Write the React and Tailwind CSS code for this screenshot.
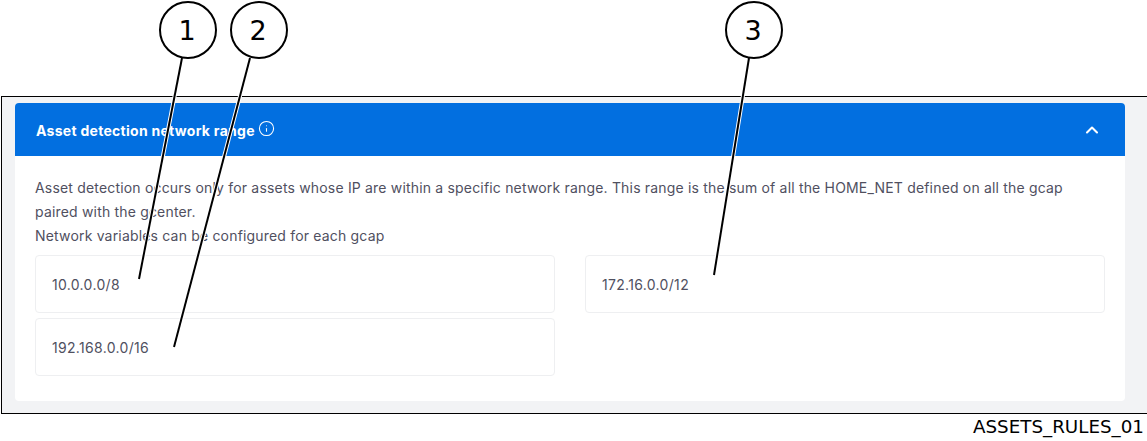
import { ChevronUp, Info } from 'lucide-react'

const ranges = ['10.0.0.0/8', '172.16.0.0/12', '192.168.0.0/16']

const callouts = [
  { label: '1', left: 'left-[159px]', line: [182, 58, 139, 279] },
  { label: '2', left: 'left-[230px]', line: [250, 58, 174, 347] },
  { label: '3', left: 'left-[725px]', line: [749, 58, 714, 275] },
]

function Callout({ label, left }) {
  return (
    <div className={`absolute top-[1px] ${left} w-[58px] h-[58px] rounded-full border-2 border-black bg-white flex items-center justify-center pt-[2px] pr-[2px] font-['DejaVu_Sans',sans-serif] text-[27px] text-black`}>
      {label}
    </div>
  )
}

export default function App() {
  return (
    <div className="relative w-[1147px] h-[441px] overflow-hidden bg-white font-['Inter',sans-serif]">
      <div className="h-[96px]" />

      <div className="ml-[1px] h-[318px] border border-r-0 border-black bg-[#f2f3f5] pt-[6px] pl-[13px] pr-[22px]">
        <div className="rounded-[4px] bg-white h-[298px]">
          <div className="h-[53px] rounded-t-[4px] bg-[#026fe0] pl-[21px] pr-[23px] flex items-center justify-between text-white">
            <div className="flex items-center gap-[3px]">
              <span className="text-[14px] font-bold tracking-[0.28px] pt-[1px]">Asset detection network range</span>
              <Info size={17} strokeWidth={1.5} className="-mt-[3px]" />
            </div>
            <ChevronUp size={20} strokeWidth={2.5} />
          </div>

          <div className="px-[20px] pt-[20px] text-[14px] leading-[24px] tracking-[0.18px] text-[#50505f]">
            <p>
              Asset detection occurs only for assets whose IP are within a specific network range. This range is the sum of all the HOME_NET defined on all the gcap
              paired with the gcenter.
              <br />
              Network variables can be configured for each gcap
            </p>
            <div className="mt-[7px] grid grid-cols-[520px_520px] gap-x-[30px] gap-y-[5px]">
              {ranges.map((range) => (
                <div key={range} className="h-[58px] rounded-[4px] border border-[#eeeff1] px-[16px] pt-[1px] flex items-center tracking-[0.32px] text-[#50505f]">
                  {range}
                </div>
              ))}
            </div>
          </div>
        </div>
      </div>

      <div className="pr-[3px] pt-[1px] text-right font-['DejaVu_Sans',sans-serif] text-[18.3px] leading-[24px] text-black">
        ASSETS_RULES_01
      </div>

      {/* leader lines have a thin white edge, it shows over the blue bar and the text */}
      <svg className="absolute inset-0" width="1147" height="441">
        {callouts.map(({ label, line }) => (
          <g key={label}>
            <line x1={line[0]} y1={line[1]} x2={line[2]} y2={line[3]} stroke="white" strokeWidth="4" />
            <line x1={line[0]} y1={line[1]} x2={line[2]} y2={line[3]} stroke="black" strokeWidth="2" />
          </g>
        ))}
      </svg>

      {callouts.map((c) => (
        <Callout key={c.label} label={c.label} left={c.left} />
      ))}
    </div>
  )
}
